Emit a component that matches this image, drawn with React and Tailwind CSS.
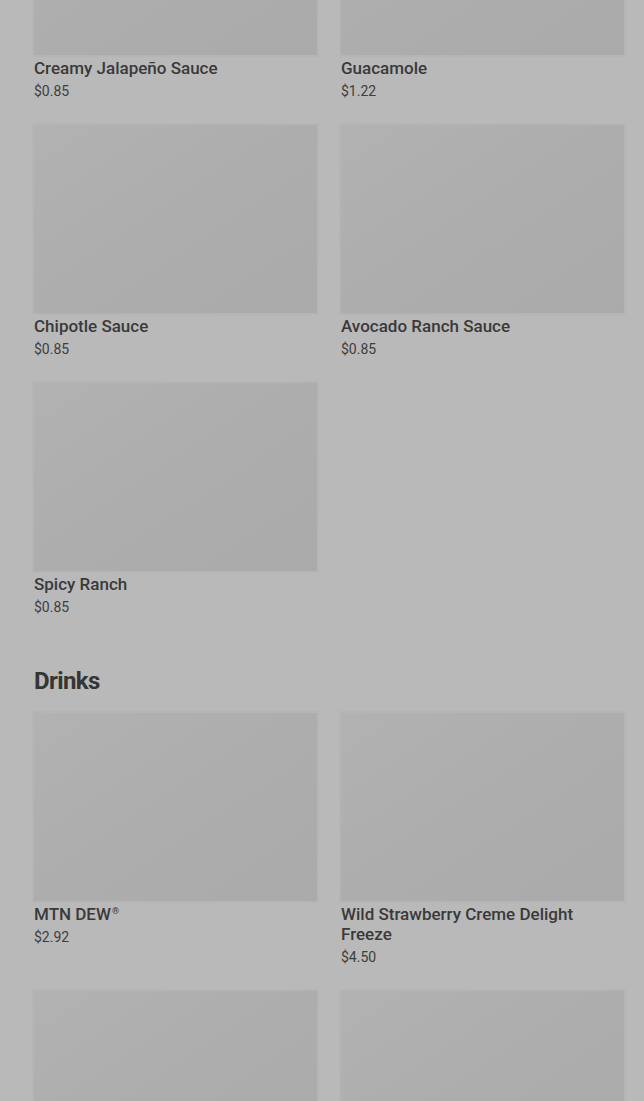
import React from 'react';

const sauces = [
  { name: 'Creamy Jalapeño Sauce', price: '$0.85' },
  { name: 'Guacamole', price: '$1.22' },
  { name: 'Chipotle Sauce', price: '$0.85' },
  { name: 'Avocado Ranch Sauce', price: '$0.85' },
  { name: 'Spicy Ranch', price: '$0.85' },
];

// last two cards are only partly in view, so no title/price yet
const drinks = [
  { id: 1, name: 'MTN DEW', reg: true, price: '$2.92' },
  { id: 2, name: 'Wild Strawberry Creme Delight Freeze', price: '$4.50' },
  { id: 3 },
  { id: 4 },
];

const MenuCard = ({ item }) => (
  <div className="flex flex-col pb-6">
    {/* image placeholder */}
    <div className="h-[188px] w-full bg-gradient-to-br from-[#b2b2b2] via-[#adadad] to-[#aaaaaa] shadow-[0_0_0_2px_#b5b5b5]" />
    {item.name && (
      <>
        <p className="mt-[3px] text-[17px] leading-5 font-medium text-[#3a3a3a]">
          {item.name}
          {item.reg && <sup className="text-[9px] ml-px -top-[6px]">®</sup>}
        </p>
        <p className="mt-[3px] text-[14px] leading-5 text-[#3e3e3e]">{item.price}</p>
      </>
    )}
  </div>
);

const App = () => {
  return (
    <div className="h-[1101px] overflow-hidden bg-[#b9b9b9]" style={{ fontFamily: 'Roboto, "Liberation Sans", sans-serif' }}>
      <div className="-mt-[133px] pl-[34px] pr-[20px]">
        <div className="grid grid-cols-2 gap-x-6">
          {sauces.map((s) => (
            <MenuCard key={s.name} item={s} />
          ))}
        </div>

        <h2 className="mt-[26px] mb-[18px] text-[24px] leading-7 font-bold tracking-tight text-[#353535]">Drinks</h2>

        <div className="grid grid-cols-2 gap-x-6">
          {drinks.map((d) => (
            <MenuCard key={d.id} item={d} />
          ))}
        </div>
      </div>
    </div>
  );
};

export default App;
